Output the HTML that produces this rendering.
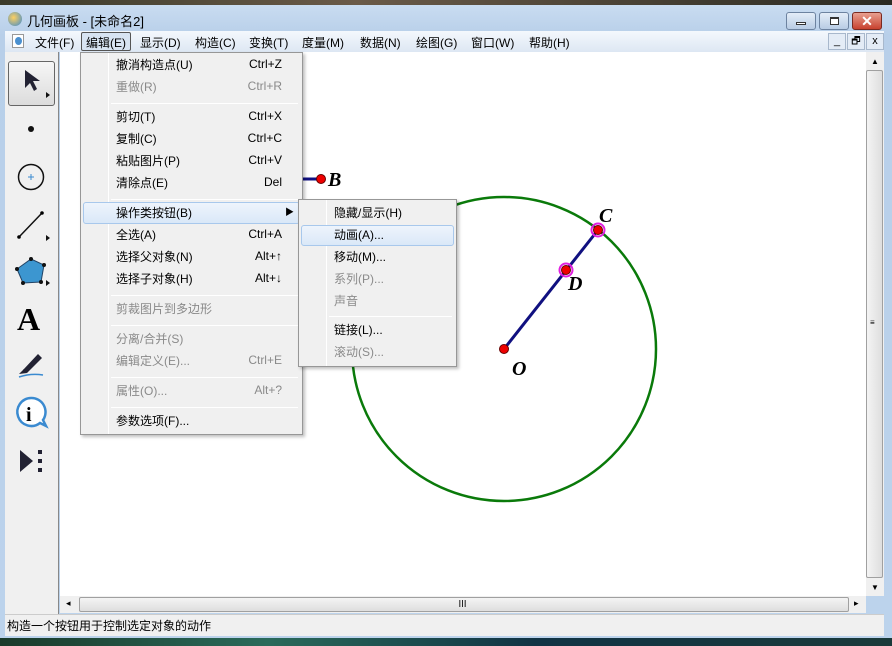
<!DOCTYPE html>
<html><head><meta charset="utf-8"><style>
*{margin:0;padding:0;box-sizing:border-box}
body{width:892px;height:646px;overflow:hidden;position:relative;font-family:"Liberation Sans","Noto Sans CJK SC",sans-serif;font-size:12px;color:#000;background:#c4d8ee}
.abs{position:absolute}
.mi{position:absolute;left:35px;white-space:nowrap;margin-top:-2px}
.sc{position:absolute;right:20px;white-space:nowrap;margin-top:-1px}
.dis{color:#8a8a8a}
.sep{position:absolute;left:30px;right:4px;height:1px;background:#d6d6d6;border-bottom:1px solid #fff}
</style></head><body>
<div class="abs" style="left:0;top:0;width:892px;height:5px;background:linear-gradient(90deg,#3a3a2a,#6a5a48 40%,#2a2a22)"></div>
<div class="abs" style="left:0;top:5px;width:892px;height:633px;background:linear-gradient(#c9dcf1,#b8cfe9 30px,#bcd3ec)"></div>
<div class="abs" style="left:0;top:638px;width:892px;height:8px;background:linear-gradient(90deg,#1a3a2a,#2a6a5a 30%,#113344 60%,#1a3a3a)"></div>
<!-- title -->
<div class="abs" style="left:8px;top:12px;width:14px;height:14px;border-radius:50%;background:radial-gradient(circle at 40% 40%,#ffd060,#3a8ad0)"></div>
<div class="abs" style="left:27px;top:11px;font-size:13px">几何画板 - [未命名2]</div>
<div class="abs" style="left:786px;top:12px;width:30px;height:18px;border:1px solid #6d83a0;border-radius:3px;background:linear-gradient(#e4edf8,#b8cce4)"><div class="abs" style="left:9px;top:9px;width:10px;height:3px;background:#fff;border:1px solid #333"></div></div>
<div class="abs" style="left:819px;top:12px;width:30px;height:18px;border:1px solid #6d83a0;border-radius:3px;background:linear-gradient(#e4edf8,#b8cce4)"><div class="abs" style="left:10px;top:4px;width:9px;height:8px;border:1px solid #333;border-top-width:2px;background:#fff"></div></div>
<div class="abs" style="left:852px;top:12px;width:30px;height:18px;border:1px solid #7a2a20;border-radius:3px;background:linear-gradient(#e8a090,#c8412e);color:#fff;font-weight:bold;font-size:14px;text-align:center;line-height:16px">✕</div>
<!-- menubar -->
<div class="abs" style="left:5px;top:31px;width:879px;height:21px;background:linear-gradient(#f4f8fd,#dde7f3)"></div>
<div class="abs" style="left:12px;top:34px;width:12px;height:14px;background:#fff;border:1px solid #999"><div style="margin:2px;width:7px;height:8px;border-radius:50%;background:#4a90d0"></div></div>
<div class="abs" style="left:35px;top:34px">文件(F)</div>
<div class="abs" style="left:81px;top:32px;width:50px;height:19px;border:1px solid #555;border-radius:2px;background:#d8e4f2"></div>
<div class="abs" style="left:86px;top:34px">编辑(E)</div>
<div class="abs" style="left:140px;top:34px">显示(D)</div>
<div class="abs" style="left:195px;top:34px">构造(C)</div>
<div class="abs" style="left:249px;top:34px">变换(T)</div>
<div class="abs" style="left:302px;top:34px">度量(M)</div>
<div class="abs" style="left:360px;top:34px">数据(N)</div>
<div class="abs" style="left:416px;top:34px">绘图(G)</div>
<div class="abs" style="left:471px;top:34px">窗口(W)</div>
<div class="abs" style="left:529px;top:34px">帮助(H)</div>
<div class="abs" style="left:828px;top:33px;width:18px;height:17px;border:1px solid #a8b8cc;background:#e4ecf6;font-size:11px;text-align:center;line-height:15px">_</div>
<div class="abs" style="left:847px;top:33px;width:18px;height:17px;border:1px solid #a8b8cc;background:#e4ecf6;font-size:10px;text-align:center;line-height:15px">🗗</div>
<div class="abs" style="left:866px;top:33px;width:18px;height:17px;border:1px solid #a8b8cc;background:#e4ecf6;font-size:11px;text-align:center;line-height:15px">x</div>
<!-- toolbar -->
<div class="abs" style="left:5px;top:52px;width:54px;height:562px;background:#f0f0f0;border-right:1px solid #888"></div>
<div class="abs" style="left:8px;top:61px;width:47px;height:45px;border:1px solid #666;border-radius:3px;background:linear-gradient(#f6f6f6,#dcdcdc)"></div>
<svg class="abs" style="left:5px;top:52px" width="54" height="440">
<path d="M20 18 L20 36 L25 31 L29 39 L32 37 L28 29 L35 29 Z" fill="#223"/>
<path d="M41 40 l4 3 l-4 3z M41 183 l4 3 l-4 3z M41 228 l4 3 l-4 3z" fill="#111"/>
<circle cx="26" cy="77" r="3" fill="#111"/>
<circle cx="26" cy="125" r="12.5" fill="none" stroke="#111" stroke-width="1.5"/>
<path d="M23 125h6M26 122v6" stroke="#3a8ad0"/>
<line x1="14" y1="185" x2="37" y2="161" stroke="#111" stroke-width="1.5"/><circle cx="14" cy="185" r="1.8"/><circle cx="37" cy="161" r="1.8"/>
<path d="M26 207 L39 213 L36 230 L18 231 L12 217 Z" fill="#3c96d0" stroke="#246" stroke-width="1"/>
<g fill="#111"><circle cx="26" cy="207" r="2"/><circle cx="39" cy="213" r="2"/><circle cx="36" cy="230" r="2"/><circle cx="18" cy="231" r="2"/><circle cx="12" cy="217" r="2"/></g>
<text x="12" y="278" font-family="Liberation Serif" font-weight="bold" font-size="32">A</text>
<path d="M18 318 L33 302 L37 306 L22 321 Z" fill="#223"/><path d="M14 322 L19 317 L22 321 Z" fill="#223"/><path d="M14 325 Q26 321 38 323" stroke="#3a8ad0" fill="none" stroke-width="1.5"/>
<path d="M26 346 a14 14 0 1 0 9 25 l6 3 l-3 -6 a14 14 0 0 0 -12 -22z" fill="#fff" stroke="#3a8ad0" stroke-width="2.5"/>
<text x="21" y="369" font-family="Liberation Serif" font-weight="bold" font-size="20">i</text>
<path d="M15 398 L15 420 L28 409 Z" fill="#223"/><rect x="33" y="398" width="4" height="4" fill="#223"/><rect x="33" y="407" width="4" height="4" fill="#223"/><rect x="33" y="416" width="4" height="4" fill="#223"/>
</svg>
<!-- canvas -->
<div class="abs" style="left:60px;top:52px;width:806px;height:544px;background:#fff"></div>
<svg class="abs" style="left:60px;top:52px" width="806" height="544">
<circle cx="444" cy="297" r="152" fill="none" stroke="#0a7a0a" stroke-width="2.5"/>
<line x1="444" y1="297" x2="538" y2="178" stroke="#101080" stroke-width="3"/>
<line x1="243" y1="127" x2="261" y2="127" stroke="#101080" stroke-width="3"/>
<circle cx="261" cy="127" r="4.5" fill="#e00" stroke="#600"/>
<circle cx="444" cy="297" r="4.5" fill="#e00" stroke="#600"/>
<circle cx="538" cy="178" r="6.5" fill="none" stroke="#e020e0" stroke-width="2"/><circle cx="538" cy="178" r="4.5" fill="#e00" stroke="#600"/>
<circle cx="506" cy="218" r="6.5" fill="none" stroke="#e020e0" stroke-width="2"/><circle cx="506" cy="218" r="4.5" fill="#e00" stroke="#600"/>
<g font-family="Liberation Serif" font-style="italic" font-weight="bold" font-size="20">
<text x="268" y="134">B</text><text x="539" y="170">C</text><text x="508" y="238">D</text><text x="452" y="323">O</text></g>
</svg>
<!-- scrollbars -->
<div class="abs" style="left:866px;top:52px;width:18px;height:544px;background:#f0f0f0"></div>
<div class="abs" style="left:866px;top:70px;width:17px;height:508px;border:1px solid #a0a0a0;border-radius:2px;background:linear-gradient(90deg,#f4f4f4,#dedede)"></div>
<div class="abs" style="left:871px;top:57px;font-size:8px">▲</div>
<div class="abs" style="left:871px;top:583px;font-size:8px">▼</div>
<div class="abs" style="left:870px;top:318px;font-size:8px">≡</div>
<div class="abs" style="left:60px;top:596px;width:806px;height:17px;background:#f0f0f0"></div>
<div class="abs" style="left:79px;top:597px;width:770px;height:15px;border:1px solid #a0a0a0;border-radius:2px;background:linear-gradient(#f4f4f4,#dedede)"></div>
<div class="abs" style="left:66px;top:598px;font-size:9px">◂</div>
<div class="abs" style="left:854px;top:598px;font-size:9px">▸</div>
<div class="abs" style="left:458px;top:597px;font-size:9px">Ⅲ</div>
<!-- status -->
<div class="abs" style="left:5px;top:614px;width:879px;height:22px;background:#f0f0f0;border-top:1px solid #ccc"></div>
<div class="abs" style="left:7px;top:617px;font-size:12px">构造一个按钮用于控制选定对象的动作</div>
<!-- edit menu -->
<div class="abs" style="left:80px;top:52px;width:223px;height:383px;background:#f0f0f0;border:1px solid #979797;box-shadow:2px 2px 3px rgba(0,0,0,.25)">
<div class="abs" style="left:27px;top:0;width:1px;height:381px;background:#e0e0e0;border-right:1px solid #fff"></div>
<div class="mi" style="top:5px">撤消构造点(U)</div><div class="sc" style="top:5px">Ctrl+Z</div>
<div class="mi dis" style="top:27px">重做(R)</div><div class="sc dis" style="top:27px">Ctrl+R</div>
<div class="sep" style="top:50px"></div>
<div class="mi" style="top:57px">剪切(T)</div><div class="sc" style="top:57px">Ctrl+X</div>
<div class="mi" style="top:79px">复制(C)</div><div class="sc" style="top:79px">Ctrl+C</div>
<div class="mi" style="top:101px">粘贴图片(P)</div><div class="sc" style="top:101px">Ctrl+V</div>
<div class="mi" style="top:123px">清除点(E)</div><div class="sc" style="top:123px">Del</div>
<div class="sep" style="top:146px"></div>
<div class="abs" style="left:2px;top:149px;width:217px;height:22px;border:1px solid #a8c8ec;border-radius:3px;background:linear-gradient(#eef4fc,#dae8f8)"></div>
<div class="mi" style="top:153px">操作类按钮(B)</div><div class="abs" style="left:204px;top:152px;font-size:9px">▶</div>
<div class="mi" style="top:175px">全选(A)</div><div class="sc" style="top:175px">Ctrl+A</div>
<div class="mi" style="top:197px">选择父对象(N)</div><div class="sc" style="top:197px">Alt+↑</div>
<div class="mi" style="top:219px">选择子对象(H)</div><div class="sc" style="top:219px">Alt+↓</div>
<div class="sep" style="top:242px"></div>
<div class="mi dis" style="top:249px">剪裁图片到多边形</div>
<div class="sep" style="top:272px"></div>
<div class="mi dis" style="top:279px">分离/合并(S)</div>
<div class="mi dis" style="top:301px">编辑定义(E)...</div><div class="sc dis" style="top:301px">Ctrl+E</div>
<div class="sep" style="top:324px"></div>
<div class="mi dis" style="top:331px">属性(O)...</div><div class="sc dis" style="top:331px">Alt+?</div>
<div class="sep" style="top:354px"></div>
<div class="mi" style="top:361px">参数选项(F)...</div>
</div>
<!-- submenu -->
<div class="abs" style="left:298px;top:199px;width:159px;height:168px;background:#f0f0f0;border:1px solid #979797;box-shadow:2px 2px 3px rgba(0,0,0,.25)">
<div class="abs" style="left:27px;top:0;width:1px;height:166px;background:#e0e0e0;border-right:1px solid #fff"></div>
<div class="mi" style="top:6px">隐藏/显示(H)</div>
<div class="abs" style="left:2px;top:25px;width:153px;height:21px;border:1px solid #a8c8ec;border-radius:3px;background:linear-gradient(#eef4fc,#dae8f8)"></div>
<div class="mi" style="top:28px">动画(A)...</div>
<div class="mi" style="top:50px">移动(M)...</div>
<div class="mi dis" style="top:72px">系列(P)...</div>
<div class="mi dis" style="top:94px">声音</div>
<div class="sep" style="top:116px"></div>
<div class="mi" style="top:123px">链接(L)...</div>
<div class="mi dis" style="top:145px">滚动(S)...</div>
</div>
</body></html>
